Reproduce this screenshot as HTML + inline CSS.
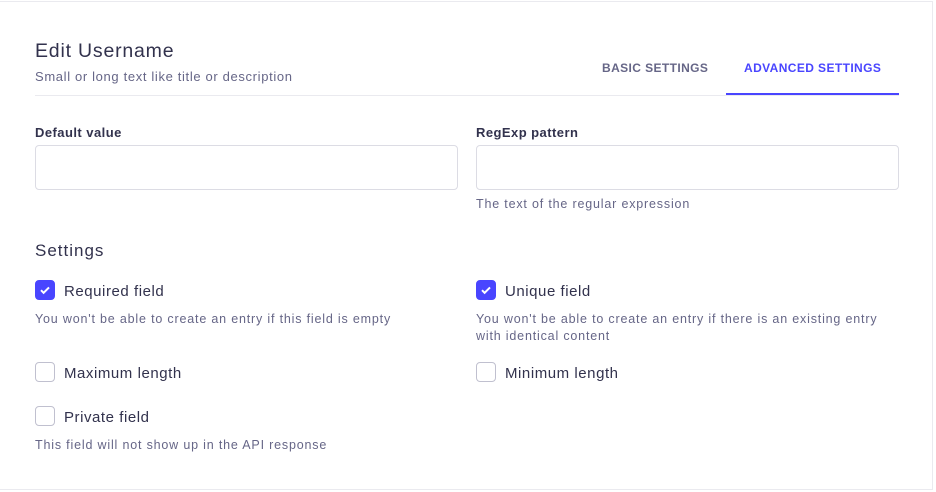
<!DOCTYPE html>
<html><head><style>
*{margin:0;padding:0;box-sizing:border-box}
body{width:936px;height:492px;background:#fff;font-family:"Liberation Sans",sans-serif;position:relative;overflow:hidden}
.card{position:absolute;left:-2px;top:1px;width:935px;height:489px;border:1px solid #eaeaef;border-left:none;}
.a{position:absolute;white-space:nowrap}
.t{font-size:19.5px;color:#32324d;font-weight:500;letter-spacing:0.8px}
.s{font-size:13px;color:#666687;letter-spacing:0.65px}
.tab{font-size:12px;font-weight:bold;letter-spacing:.4px}
.lb{font-size:13px;font-weight:bold;color:#32324d;letter-spacing:0.45px}
.in{position:absolute;height:45px;width:423px;border:1px solid #dcdce4;border-radius:4px}
.h{font-size:12.5px;color:#666687;letter-spacing:0.82px}
.cb{position:absolute;width:20px;height:20px;border:1px solid #c0c0cf;border-radius:4px;background:#fff}
.cb.on{background:#4945ff;border-color:#4945ff}
.cl{font-size:15px;color:#32324d;letter-spacing:0.55px}
</style></head><body>
<div class="card"></div>
<div class="a t" style="left:35px;top:40px">Edit Username</div>
<div class="a s" style="left:35px;top:69px">Small or long text like title or description</div>
<div style="position:absolute;left:35px;top:95px;width:864px;height:1px;background:#eaeaef"></div>
<div class="a tab" style="left:602px;top:61px;color:#666687">BASIC SETTINGS</div>
<div class="a tab" style="left:744px;top:61px;color:#4945ff">ADVANCED SETTINGS</div>
<div style="position:absolute;left:726px;top:93px;width:173px;height:2px;background:#4945ff"></div>
<div class="a lb" style="left:35px;top:125px">Default value</div>
<div class="a lb" style="left:476px;top:125px">RegExp pattern</div>
<div class="in" style="left:35px;top:145px"></div>
<div class="in" style="left:476px;top:145px"></div>
<div class="a h" style="left:476px;top:197px">The text of the regular expression</div>
<div class="a" style="left:35px;top:241px;font-size:17px;color:#32324d;letter-spacing:1px">Settings</div>
<div class="cb on" style="left:35px;top:280px"><svg width="18" height="18" viewBox="0 0 18 18"><path d="M5 9.2l2.6 2.6L13 6.4" stroke="#fff" stroke-width="2" fill="none"/></svg></div>
<div class="a cl" style="left:64px;top:283px">Required field</div>
<div class="a h" style="left:35px;top:312px">You won't be able to create an entry if this field is empty</div>
<div class="cb on" style="left:476px;top:280px"><svg width="18" height="18" viewBox="0 0 18 18"><path d="M5 9.2l2.6 2.6L13 6.4" stroke="#fff" stroke-width="2" fill="none"/></svg></div>
<div class="a cl" style="left:505px;top:283px">Unique field</div>
<div class="a h" style="left:476px;top:311px;line-height:17px">You won't be able to create an entry if there is an existing entry<br>with identical content</div>
<div class="cb" style="left:35px;top:362px"></div>
<div class="a cl" style="left:64px;top:365px">Maximum length</div>
<div class="cb" style="left:476px;top:362px"></div>
<div class="a cl" style="left:505px;top:365px">Minimum length</div>
<div class="cb" style="left:35px;top:406px"></div>
<div class="a cl" style="left:64px;top:409px">Private field</div>
<div class="a h" style="left:35px;top:438px">This field will not show up in the API response</div>
</body></html>
